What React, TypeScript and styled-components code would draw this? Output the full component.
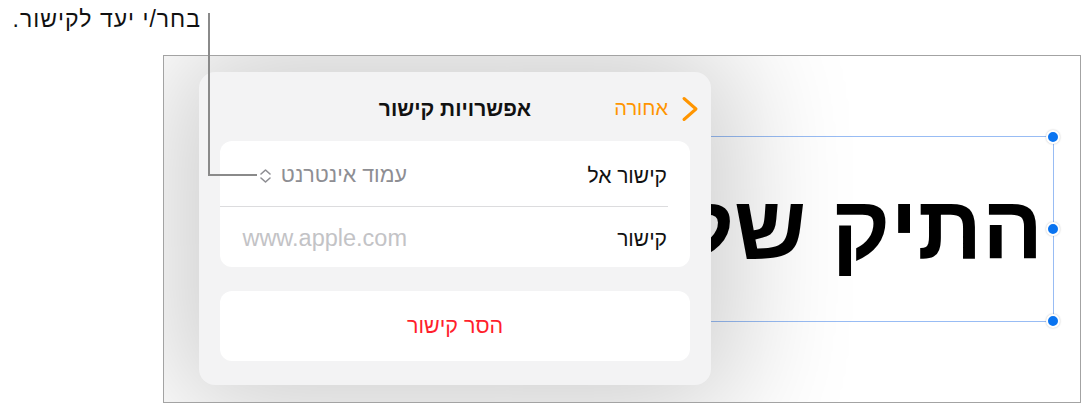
import React from 'react';
import styled, { createGlobalStyle } from 'styled-components';

const GlobalStyle = createGlobalStyle`
  html, body {
    margin: 0;
    padding: 0;
    background: #ffffff;
  }
  body {
    font-family: "Liberation Sans", "DejaVu Sans", sans-serif;
    color: #111111;
  }
`;

const Page = styled.div`
  position: relative;
  width: 1083px;
  height: 404px;
  overflow: hidden;
`;

const Caption = styled.div`
  box-sizing: border-box;
  width: 201px;
  height: 55px;
  padding-top: 6px;
  direction: rtl;
  text-align: right;
  font-size: 23px;
  line-height: 26px;
  letter-spacing: 1px;
  color: #111111;
  white-space: nowrap;
`;

// callout leader from caption down to the link-type value
const Leader = styled.div`
  position: absolute;
  left: 208px;
  top: 13px;
  width: 47px;
  height: 161px;
  border-left: 2px solid #8a8a8a;
  border-bottom: 2px solid #8a8a8a;
  z-index: 5;
`;

const Frame = styled.div`
  position: relative;
  box-sizing: border-box;
  margin-left: 163px;
  width: 918px;
  height: 348px;
  border: 1px solid #a3a3a3;
  background: #ffffff;
  overflow: hidden;
`;

const Selection = styled.div`
  position: absolute;
  top: 80px;
  right: 26px;
  left: 540px;
  height: 186px;
  border: 1px solid #98bcf4;
  border-left: none;
  box-sizing: border-box;
`;

const TextClip = styled.div`
  height: 100%;
  overflow: hidden;
  display: flex;
  align-items: center;
  justify-content: flex-end;
  padding-right: 10px;
`;

const BigText = styled.div`
  direction: rtl;
  white-space: nowrap;
  font-size: 90px;
  font-weight: 700;
  color: #000000;
  line-height: 1;
  margin-top: -2px;
`;

const Handle = styled.span<{ $at: 'top' | 'middle' | 'bottom' }>`
  position: absolute;
  right: -7px;
  top: ${(p) => (p.$at === 'top' ? '-7px' : p.$at === 'middle' ? 'calc(50% - 7px)' : 'auto')};
  bottom: ${(p) => (p.$at === 'bottom' ? '-7px' : 'auto')};
  width: 10px;
  height: 10px;
  border-radius: 50%;
  background: #0a74f0;
  border: 2px solid #ffffff;
  box-shadow: 0 0 2px rgba(0, 0, 0, 0.25);
`;

const Popover = styled.div`
  position: absolute;
  left: 35px;
  top: 16px;
  width: 512px;
  height: 313px;
  box-sizing: border-box;
  padding: 0 21px 23px;
  border-radius: 16px;
  background: #f3f3f4;
  box-shadow: 0 0 120px 26px rgba(0, 0, 0, 0.2);
  direction: rtl;
  display: flex;
  flex-direction: column;
  z-index: 2;
`;

const Header = styled.div`
  display: grid;
  grid-template-columns: 1fr auto 1fr;
  align-items: center;
  height: 65px;
  padding-top: 4px;
`;

const BackButton = styled.div`
  display: flex;
  align-items: center;
  gap: 13px;
  margin-right: -9px;
  color: #ff9500;
  font-size: 20px;
`;

const Title = styled.div`
  font-size: 21px;
  font-weight: 700;
  color: #111111;
`;

const Card = styled.div`
  background: #ffffff;
  border-radius: 12px;
  overflow: hidden;
`;

const Row = styled.div<{ $divider?: boolean; $h: number }>`
  display: grid;
  grid-template-columns: 260px 1fr;
  align-items: center;
  height: ${(p) => p.$h}px;
  padding-right: 23px;
  position: relative;
  font-size: 21px;
  ${(p) =>
    p.$divider &&
    `
    &::after {
      content: '';
      position: absolute;
      left: 0;
      right: 22px;
      bottom: 0;
      height: 1px;
      background: #dcdcde;
    }
  `}
`;

const Label = styled.span`
  color: #111111;
  padding-top: 3px;
`;

const Value = styled.span<{ $placeholder?: boolean }>`
  display: flex;
  align-items: center;
  gap: 9px;
  padding-top: 3px;
  font-size: 21.5px;
  color: ${(p) => (p.$placeholder ? '#c3c3c6' : '#8e8e93')};
`;

const Url = styled.span`
  direction: ltr;
  font-size: 23.5px;
`;

const RemoveCard = styled(Card)`
  margin-top: 24px;
  height: 70px;
  display: flex;
  align-items: center;
  justify-content: center;
  color: #ff1f2d;
  font-size: 21.5px;
`;

const ChevronBack = () => (
  <svg width="18" height="26" viewBox="0 0 18 26">
    <path d="M3 2.5 L15 13 L3 23.5" fill="none" stroke="#ff9500" strokeWidth="3" strokeLinecap="round" strokeLinejoin="round" />
  </svg>
);

const UpDown = () => (
  <svg width="13" height="16" viewBox="0 0 13 16">
    <path d="M2 6 L6.5 2 L11 6 M2 10 L6.5 14 L11 10" fill="none" stroke="#8e8e93" strokeWidth="1.6" strokeLinecap="round" strokeLinejoin="round" />
  </svg>
);

export default function App() {
  return (
    <Page>
      <GlobalStyle />
      <Caption>בחר/י יעד לקישור.</Caption>
      <Leader />
      <Frame>
        <Selection>
          <TextClip>
            <BigText>התיק שלי</BigText>
          </TextClip>
          <Handle $at="top" />
          <Handle $at="middle" />
          <Handle $at="bottom" />
        </Selection>
        <Popover>
          <Header>
            <BackButton>
              <ChevronBack />
              <span>אחורה</span>
            </BackButton>
            <Title>אפשרויות קישור</Title>
            <span />
          </Header>
          <Card>
            <Row $divider $h={66}>
              <Label>קישור אל</Label>
              <Value>
                <span>עמוד אינטרנט</span>
                <UpDown />
              </Value>
            </Row>
            <Row $h={60}>
              <Label>קישור</Label>
              <Value $placeholder>
                <Url>www.apple.com</Url>
              </Value>
            </Row>
          </Card>
          <RemoveCard>הסר קישור</RemoveCard>
        </Popover>
      </Frame>
    </Page>
  );
}
